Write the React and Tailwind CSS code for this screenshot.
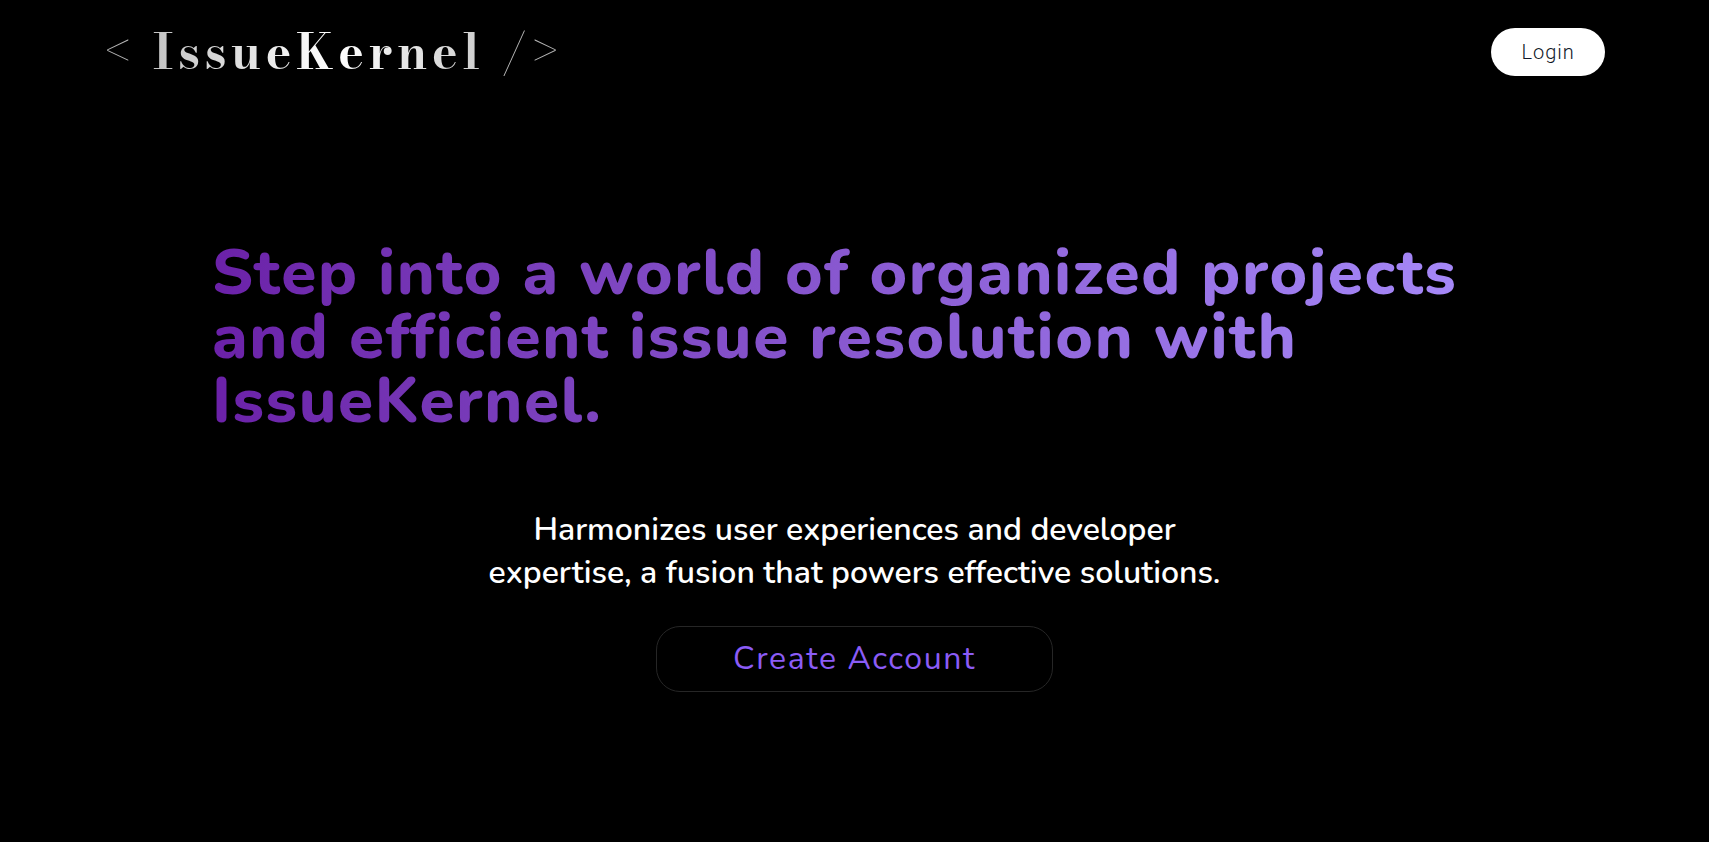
import React from 'react';

const Logo = () => (
  <a
    href="#home"
    className="bg-gradient-to-r from-[#b4b4b4] via-white to-[#b4b4b4] bg-clip-text font-['Bodoni_Moda','Libre_Bodoni','Liberation_Serif',serif] text-5xl font-bold tracking-widest whitespace-nowrap text-transparent"
  >
    &lt; IssueKernel /&gt;
  </a>
);

const Header = () => (
  <header className="flex items-center justify-between px-[6.1%] pt-7">
    <Logo />
    <button
      type="button"
      className="h-12 cursor-pointer rounded-full bg-white px-[30px] font-['Roboto',sans-serif] text-xl font-light tracking-wider text-gray-900"
    >
      Login
    </button>
  </header>
);

const Hero = () => (
  <main className="flex flex-col items-center px-[12.4%] pt-[165px]">
    <h1 className="w-full bg-gradient-to-r from-[#6b21a8] to-[#a78bfa] bg-clip-text text-[64px] leading-none font-extrabold tracking-wide text-transparent">
      Step into a world of organized projects and efficient issue resolution with IssueKernel.
    </h1>
    <p className="mt-[75px] max-w-[768px] text-center text-[32px] leading-[43px] font-semibold text-white">
      Harmonizes user experiences and developer expertise, a fusion that powers effective solutions.
    </p>
    <button
      type="button"
      className="mt-8 cursor-pointer rounded-3xl border border-neutral-800 px-[76px] py-2 text-[32px] leading-[48px] tracking-wider text-[#8b5cf6]"
    >
      Create Account
    </button>
  </main>
);

const App = () => (
  <div className="min-h-screen bg-black font-['Nunito','Lato',sans-serif]">
    <Header />
    <Hero />
  </div>
);

export default App;
